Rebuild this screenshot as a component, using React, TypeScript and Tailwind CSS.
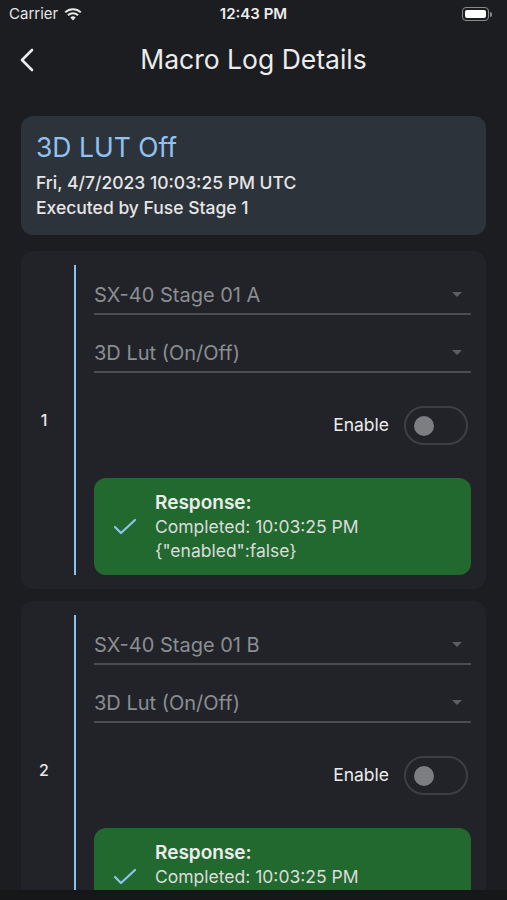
import React from "react";

const font = { fontFamily: "Inter, 'Noto Sans', sans-serif" };

function Caret() {
  return (
    <svg width="12" height="7" viewBox="0 0 12 7" className="mr-[8px]">
      <path d="M1 1 L11 1 L6 6 Z" fill="#5b5e63" />
    </svg>
  );
}

function Dropdown({ label, h }: { label: string; h: string }) {
  return (
    <div className={`${h} flex items-end border-b-[2px] border-[#4a4d52] pb-[6px]`}>
      <div className="flex-1 text-[20px] leading-[24px] text-[#8b8e92]">{label}</div>
      <div className="mb-[9px]"><Caret /></div>
    </div>
  );
}

function Step({ n, device }: { n: number; device: string }) {
  return (
    <div className="flex rounded-[12px] bg-[#212328] py-[14px] shrink-0">
      <div className="w-[46px] flex items-center justify-center text-[16px] font-medium text-[#e8e8e8]">{n}</div>
      <div className="ml-[7px] w-[2px] bg-[#8fc1ee]" />
      <div className="ml-[18px] mr-[15px] flex-1 flex flex-col">
        <Dropdown label={device} h="h-[50px]" />
        <Dropdown label="3D Lut (On/Off)" h="h-[58px]" />
        <div className="h-[105px] flex items-center justify-end pr-[3px]">
          <span className="text-[17.5px] text-[#ececec] mr-[15px]">Enable</span>
          <div className="w-[64px] h-[39px] rounded-full border-[2px] border-[#3c3f44] flex items-center pl-[8px]">
            <div className="w-[20px] h-[20px] rounded-full bg-[#7c7e82]" />
          </div>
        </div>
        <div className="rounded-[12px] bg-[#22692f] h-[97px] flex items-center">
          <div className="w-[61px] flex justify-center">
            <svg width="24" height="18" viewBox="0 0 24 18">
              <polyline points="2,9 8,15 22,2" fill="none" stroke="#8fc4ee" strokeWidth="2.2" strokeLinecap="round" strokeLinejoin="round" />
            </svg>
          </div>
          <div className="flex flex-col">
            <div className="text-[19px] leading-[25px] font-semibold text-[#ececec]">Response:</div>
            <div className="text-[17.5px] leading-[24px] text-[#dcdcdc]">Completed: 10:03:25 PM</div>
            <div className="text-[17.5px] leading-[24px] text-[#dcdcdc]">{'{"enabled":false}'}</div>
          </div>
        </div>
      </div>
    </div>
  );
}

export default function App() {
  return (
    <div className="w-[507px] h-[900px] bg-[#161719] flex flex-col overflow-hidden" style={font}>
      <div className="h-[890px] bg-[#1c1d20] flex flex-col overflow-hidden">
        {/* status bar */}
        <div className="h-[28px] flex items-center px-[9px] relative shrink-0">
          <span className="text-[15px] text-[#e6e6e6]">Carrier</span>
          <svg width="18" height="13" viewBox="0 0 18 13" className="ml-[6px]">
            <path d="M9 12.5 L6.3 9.6 A4 4 0 0 1 11.7 9.6 Z" fill="#e6e6e6" />
            <path d="M3.9 7.2 A7.4 7.4 0 0 1 14.1 7.2" fill="none" stroke="#e6e6e6" strokeWidth="2" />
            <path d="M1.2 4.4 A11.2 11.2 0 0 1 16.8 4.4" fill="none" stroke="#e6e6e6" strokeWidth="2" />
          </svg>
          <span className="absolute left-0 right-0 text-center text-[15px] font-semibold text-[#ececec]">12:43 PM</span>
          <div className="ml-auto mr-[6px] flex items-center">
            <div className="w-[27px] h-[14px] rounded-[4px] border-[1.5px] border-[#8a8a8a] p-[2px]">
              <div className="w-full h-full rounded-[2px] bg-white" />
            </div>
            <div className="w-[2px] h-[5px] bg-[#8a8a8a] rounded-r-sm ml-[1px]" />
          </div>
        </div>
        {/* nav */}
        <div className="h-[64px] flex items-center relative shrink-0">
          <svg width="16" height="24" viewBox="0 0 16 24" className="ml-[19px]">
            <polyline points="13,2 3,12 13,22" fill="none" stroke="#ececec" strokeWidth="2.6" strokeLinecap="round" strokeLinejoin="round" />
          </svg>
          <div className="absolute left-0 right-0 text-center text-[26.5px] text-[#ececec] pointer-events-none">Macro Log Details</div>
        </div>
        {/* content */}
        <div className="flex flex-col gap-[12px] px-[21px] pt-[24px]">
          <div className="rounded-[12px] bg-[#2d333b] h-[119px] px-[15px] pt-[13px] flex flex-col shrink-0 mb-[4px]">
            <div className="text-[26.5px] leading-[36px] text-[#90c3f1]">3D LUT Off</div>
            <div className="mt-[5px] text-[17.5px] leading-[25px] font-medium text-[#e6e6e6]">Fri, 4/7/2023 10:03:25 PM UTC</div>
            <div className="text-[17.5px] leading-[25px] font-medium text-[#e6e6e6]">Executed by Fuse Stage 1</div>
          </div>
          <Step n={1} device="SX-40 Stage 01 A" />
          <Step n={2} device="SX-40 Stage 01 B" />
        </div>
      </div>
    </div>
  );
}
